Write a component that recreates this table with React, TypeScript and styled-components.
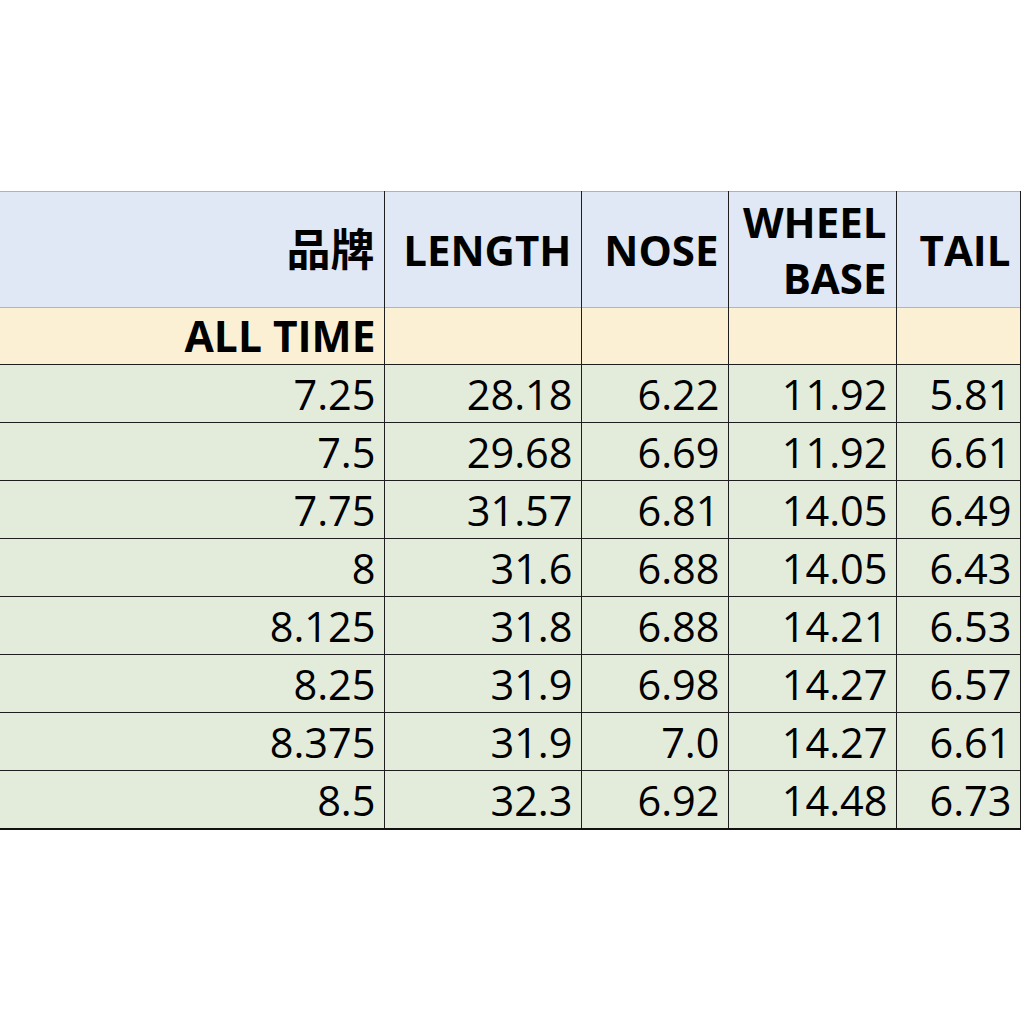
import React from "react";
import styled, { createGlobalStyle } from "styled-components";

const GlobalStyle = createGlobalStyle`
  html, body {
    margin: 0;
    padding: 0;
    background: #ffffff;
  }
  body {
    font-family: "Open Sans", "Noto Sans CJK SC", sans-serif;
    color: #000000;
  }
`;

const columns = [384, 197, 147, 168, 124];

const rows: string[][] = [
  ["7.25", "28.18", "6.22", "11.92", "5.81"],
  ["7.5", "29.68", "6.69", "11.92", "6.61"],
  ["7.75", "31.57", "6.81", "14.05", "6.49"],
  ["8", "31.6", "6.88", "14.05", "6.43"],
  ["8.125", "31.8", "6.88", "14.21", "6.53"],
  ["8.25", "31.9", "6.98", "14.27", "6.57"],
  ["8.375", "31.9", "7.0", "14.27", "6.61"],
  ["8.5", "32.3", "6.92", "14.48", "6.73"],
];

export default function App() {
  return (
    <>
      <GlobalStyle />
      <Page>
        <Sheet>
          <colgroup>
            {columns.map((w, i) => (
              <col key={i} style={{ width: w }} />
            ))}
          </colgroup>
          <thead>
            <HeadRow>
              <HeadCell>
                <Brand>品牌</Brand>
              </HeadCell>
              <HeadCell>LENGTH</HeadCell>
              <HeadCell>NOSE</HeadCell>
              <HeadCell $tight>
                WHEEL
                <br />
                BASE
              </HeadCell>
              <HeadCell>TAIL</HeadCell>
            </HeadRow>
          </thead>
          <tbody>
            <GroupRow>
              <GroupCell>ALL TIME</GroupCell>
              <GroupCell />
              <GroupCell />
              <GroupCell />
              <GroupCell />
            </GroupRow>
            {rows.map((r, i) => (
              <DataRow key={i} $last={i === rows.length - 1}>
                {r.map((v, j) => (
                  <DataCell key={j}>{v}</DataCell>
                ))}
              </DataRow>
            ))}
          </tbody>
        </Sheet>
      </Page>
    </>
  );
}

const Page = styled.div`
  padding-top: 191px;
  width: 1024px;
  height: 1024px;
  box-sizing: border-box;
  overflow: hidden;
`;

const Sheet = styled.table`
  width: 1020px;
  table-layout: fixed;
  border-collapse: collapse;
  border-top: 1px solid #a9b3bd;
`;

const HeadRow = styled.tr`
  height: 116px;
  background: #dfe8f4;
  border-bottom: 1px solid #93c9a8;
`;

const HeadCell = styled.th<{ $tight?: boolean }>`
  font-weight: 700;
  font-size: 42px;
  line-height: ${(p) => (p.$tight ? "56px" : "48px")};
  text-align: right;
  vertical-align: middle;
  padding: 0 9px 0 0;
  border-left: 1px solid #1e1e1e;
  border-right: 1px solid #1e1e1e;

  &:first-child {
    border-left: none;
  }
`;

const Brand = styled.span`
  font-size: 44px;
`;

const GroupRow = styled.tr`
  height: 57px;
  background: #fcf0d4;
  border-bottom: 1px solid #1e1e1e;
`;

const GroupCell = styled.td`
  font-weight: 700;
  font-size: 42.5px;
  line-height: 46px;
  text-align: right;
  vertical-align: bottom;
  padding: 0 8px 5px 0;
  border-left: 1px solid #1e1e1e;
  border-right: 1px solid #1e1e1e;

  &:first-child {
    border-left: none;
  }
`;

const DataRow = styled.tr<{ $last?: boolean }>`
  height: 58px;
  background: #e3ecdb;
  border-bottom: ${(p) => (p.$last ? "2px solid #111111" : "1px solid #1e1e1e")};
`;

const DataCell = styled.td`
  font-weight: 400;
  font-size: 41.5px;
  line-height: 46px;
  text-align: right;
  vertical-align: bottom;
  padding: 0 8px 5px 0;
  border-left: 1px solid #1e1e1e;
  border-right: 1px solid #1e1e1e;

  &:first-child {
    border-left: none;
  }
`;
